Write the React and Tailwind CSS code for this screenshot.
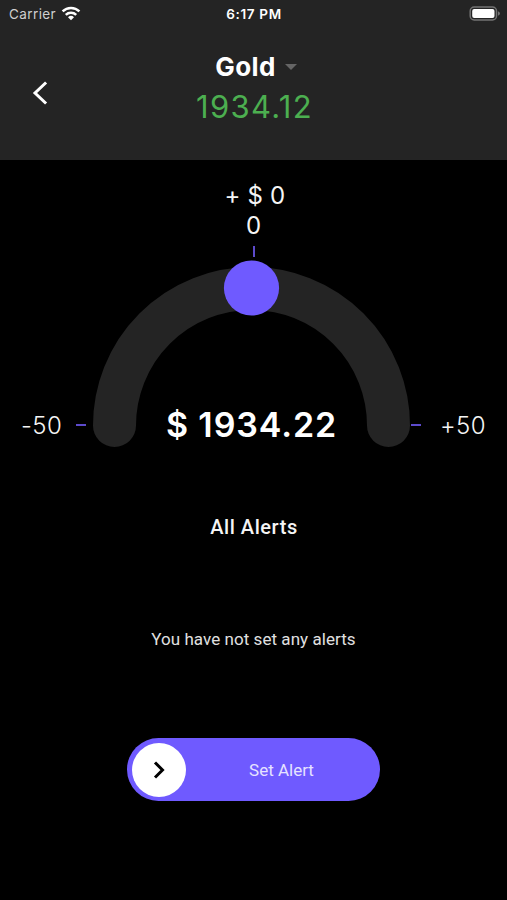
function StatusBar() {
  return (
    <div className="grid h-7 grid-cols-3 items-center pl-[9px] pr-[6px] text-[13.5px] leading-7">
      <div className="flex items-center gap-[5px] text-[#cfcfcf]">
        <span className="w-[47px] whitespace-nowrap tracking-[0.4px]">Carrier</span>
        <svg width="20" height="15" viewBox="0 0 20 15" className="-mt-0.5" fill="none" stroke="#fff" strokeWidth="2.5">
          <path d="M1.6 5.4a12 12 0 0 1 16.8 0" />
          <path d="M4.8 8.8a7.4 7.4 0 0 1 10.4 0" />
          <path d="M7 11.2a4.3 4.3 0 0 1 6 0L10 14.3z" fill="#fff" stroke="none" />
        </svg>
      </div>
      <span className="-ml-[2px] text-center font-semibold tracking-[0.65px] text-white">6:17 PM</span>
      <svg width="32" height="15" viewBox="0 0 32 15" className="-mt-0.5 justify-self-end">
        <rect x="1.2" y="1" width="26.3" height="13" rx="4" fill="#242424" stroke="#737373" strokeWidth="1.5" />
        <rect x="3.2" y="3" width="22.3" height="9" rx="2" fill="#fff" />
        <path d="M29 5.2q2 .8 2 2.3t-2 2.3z" fill="#737373" />
      </svg>
    </div>
  );
}

function Header() {
  return (
    <header className="h-40 bg-[#242424]">
      <StatusBar />
      <div className="grid grid-cols-[80px_1fr_80px] items-start pt-[22px]">
        <button className="mt-[30px] pl-8" aria-label="Back">
          <svg width="17" height="26" viewBox="0 0 17 26" fill="none" stroke="#fff" strokeWidth="3" strokeLinecap="square">
            <path d="M13 3.5L3 13l10 9.5" />
          </svg>
        </button>
        <div className="flex flex-col items-center">
          <div className="flex h-[34px] items-center gap-[9px] pl-[5px]">
            <h1 className="text-[26px] font-bold leading-[34px] tracking-[0.4px] text-white">Gold</h1>
            <svg width="12" height="6" viewBox="0 0 12 6" fill="#656565">
              <path d="M0 0h12L6 6z" />
            </svg>
          </div>
          <div className="mt-1 pl-[2px] text-[31px] leading-[38px] tracking-[1.3px] text-[#4caf50]">1934.12</div>
        </div>
      </div>
    </header>
  );
}

function Gauge() {
  return (
    <section className="flex flex-col items-center pt-[21px]">
      <div className="pl-[3px] text-[24px] leading-[30px] tracking-[0.2px] text-[#f5f5f5]">+ $ 0</div>
      <div className="text-[24px] leading-[30px] text-[#f5f5f5]">0</div>
      <div className="mt-[5px] h-[11px] w-[2px] bg-[#5c4acb]" />
      <div className="flex w-full items-end">
        <span className="mb-[11px] w-[76px] pl-[21px] text-[24px] font-light leading-[30px] tracking-[0.4px] text-[#f5f5f5]">-50</span>
        <span className="mb-[26px] mr-[7px] h-[2px] w-[10px] bg-[#5c4acb]" />
        <div className="relative h-[195px] w-[317px]">
          <svg width="317" height="195" viewBox="0 0 317 195">
            <path d="M21.5 168.5a137 137 0 0 1 274 0" fill="none" stroke="#242424" strokeWidth="43" strokeLinecap="round" />
            <circle cx="158.5" cy="31" r="27.6" fill="#6f5aff" />
          </svg>
          <div className="absolute inset-x-0 bottom-[7px] text-center text-[34px] font-semibold leading-10 tracking-[0.9px] text-white">$ 1934.22</div>
        </div>
        <span className="mb-[26px] ml-[1px] h-[2px] w-[10px] bg-[#5c4acb]" />
        <span className="mb-[11px] pl-[19px] text-[24px] font-light leading-[30px] tracking-[0.4px] text-[#f5f5f5]">+50</span>
      </div>
    </section>
  );
}

export default function App() {
  return (
    <main className="h-[900px] w-[507px] overflow-hidden bg-black font-['Inter',sans-serif]">
      <Header />
      <Gauge />
      <section className="flex flex-col items-center pt-[61px] font-['Roboto',sans-serif]">
        <h2 className="pl-[1px] text-[20px] font-medium leading-7 tracking-[0.55px] text-[#f5f5f5]">All Alerts</h2>
        <p className="mt-[86px] text-[17px] leading-6 tracking-[0.05px] text-[#e0e0e0]">You have not set any alerts</p>
        <button className="mt-[87px] flex h-[63px] w-[253px] items-center rounded-full bg-[#6f5aff] pl-[5px]">
          <span className="flex size-[54px] items-center justify-center rounded-full bg-white">
            <svg width="12" height="18" viewBox="0 0 12 18" fill="none" stroke="#000" strokeWidth="3">
              <path d="M2 1.5L9.5 9L2 16.5" />
            </svg>
          </span>
          <span className="flex-1 pr-[3px] pt-[2px] text-center text-[17px] text-[#e6e2ff]">Set Alert</span>
        </button>
      </section>
    </main>
  );
}
